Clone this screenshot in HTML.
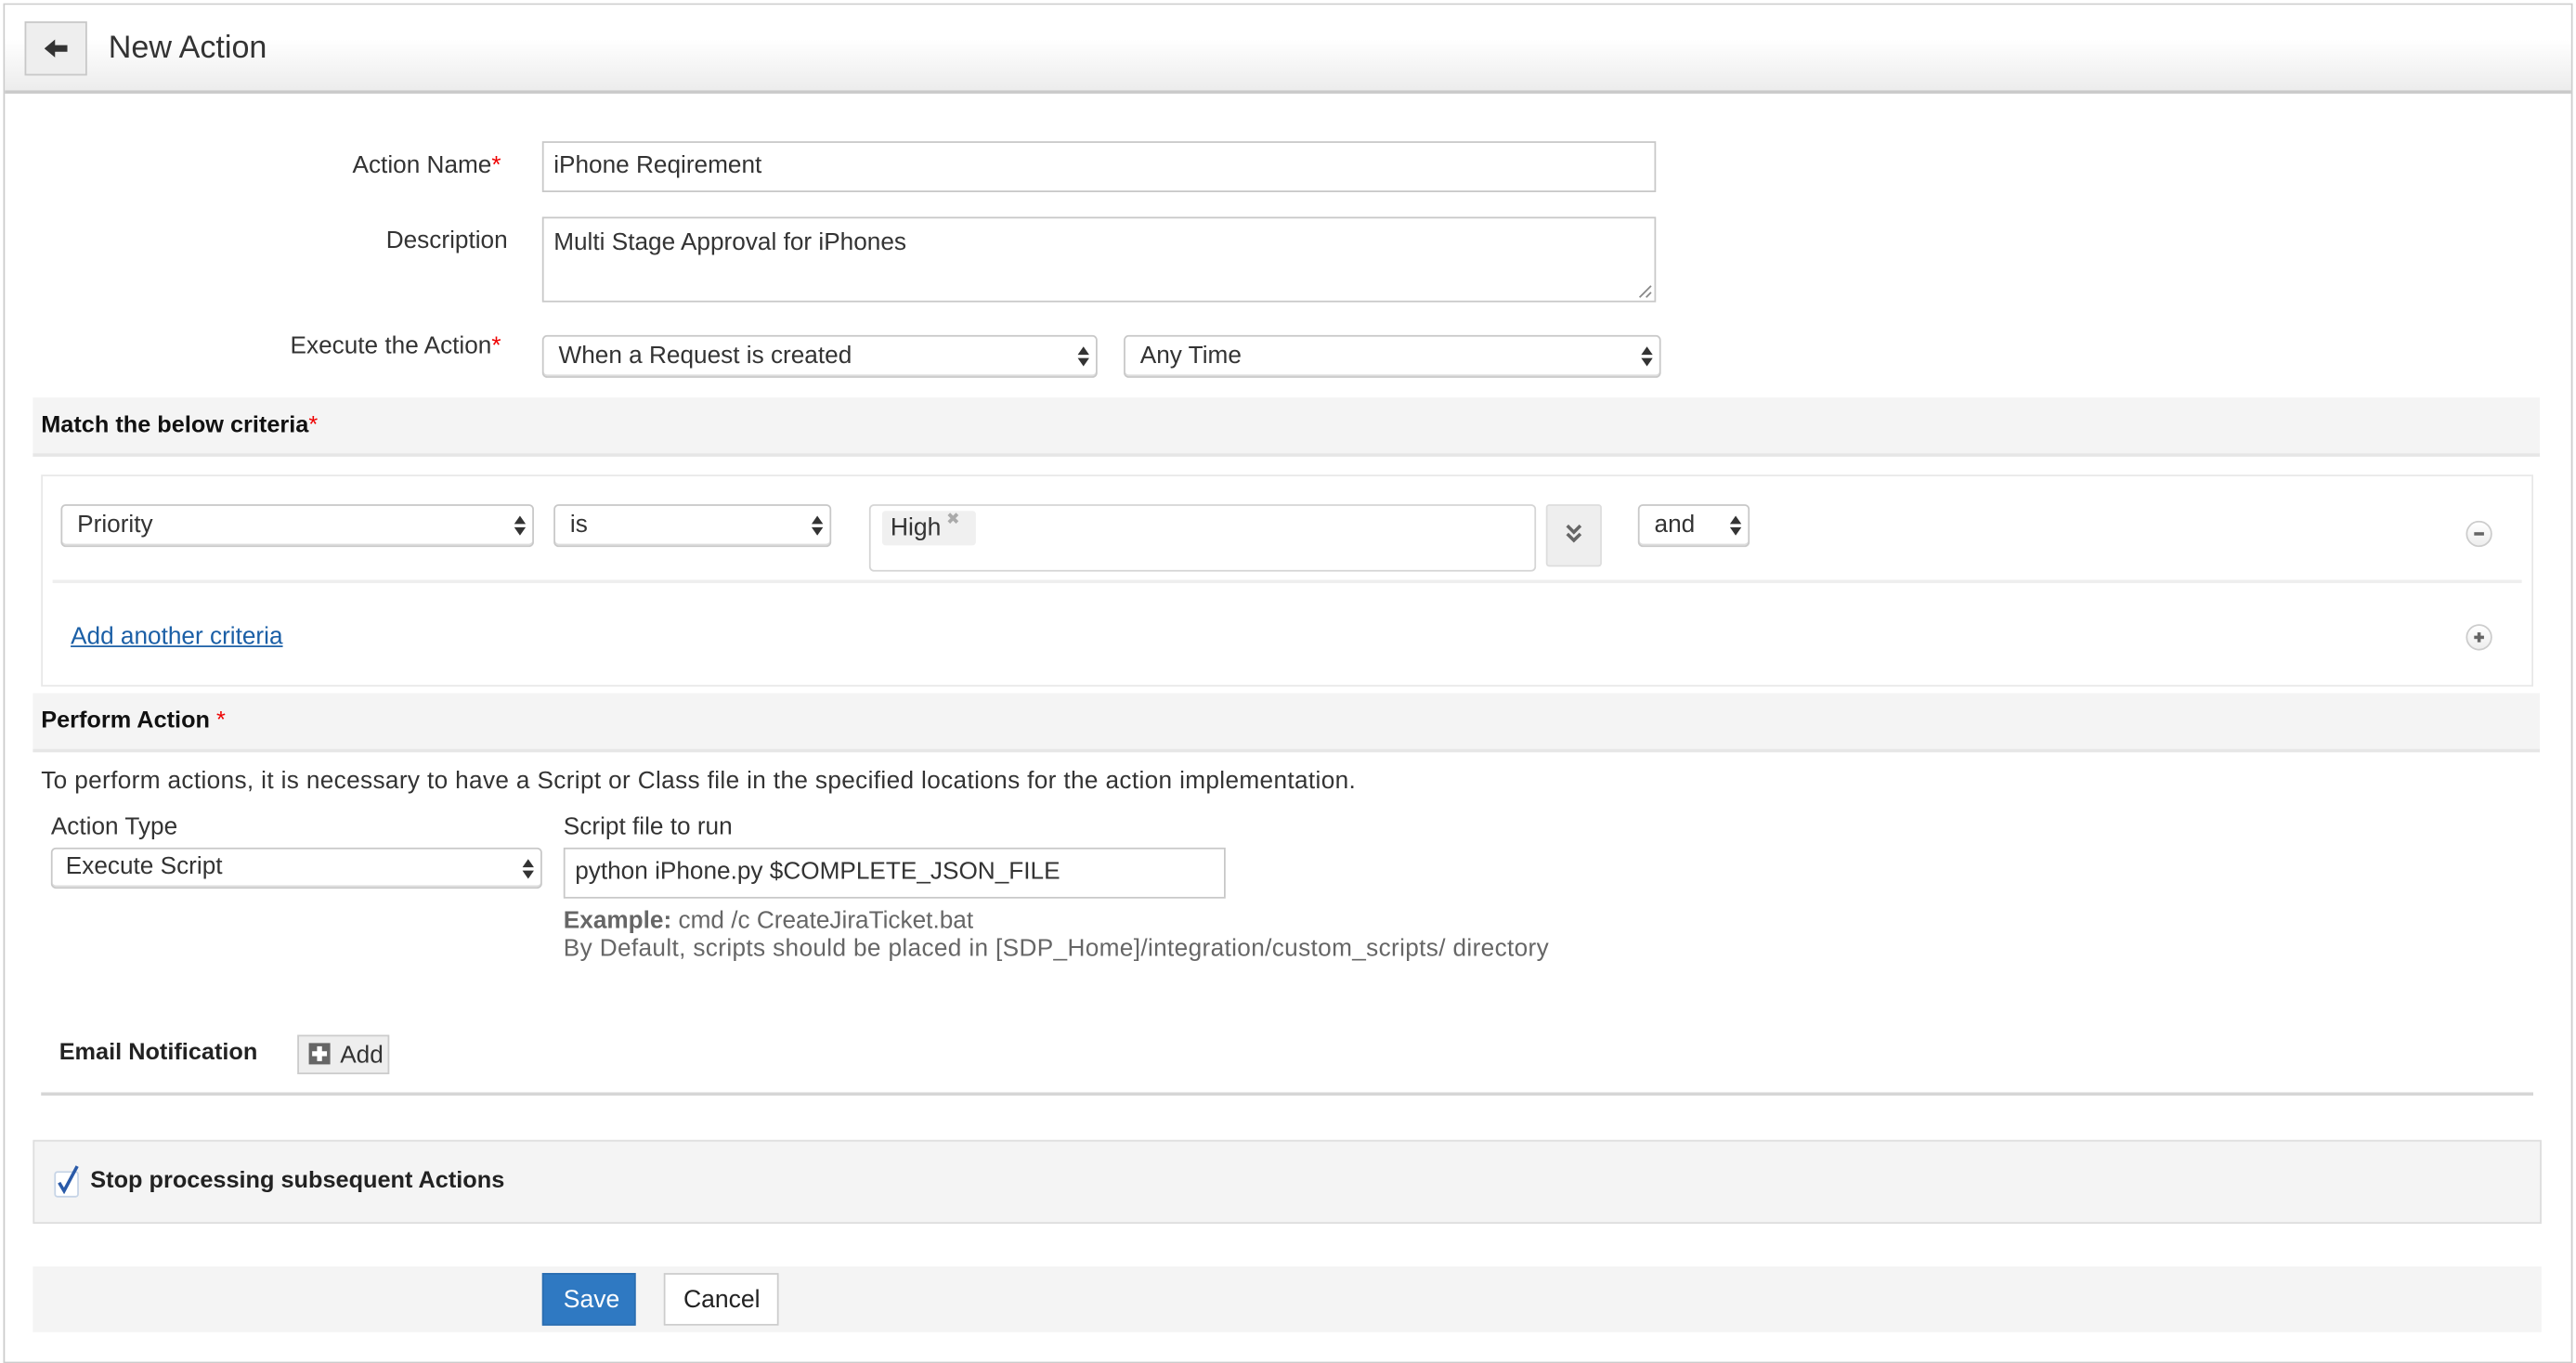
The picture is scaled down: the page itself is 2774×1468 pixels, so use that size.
<!DOCTYPE html>
<html><head><meta charset="utf-8"><style>
html,body{margin:0;padding:0;background:#fff;width:2774px;height:1468px;overflow:hidden}
#w{position:absolute;left:0;top:0;width:1568px;height:830px;transform:scale(1.76913);transform-origin:0 0;font-family:"Liberation Sans",Arial,sans-serif;font-size:14.8px;color:#333}
.a{position:absolute;box-sizing:border-box}
.t{position:absolute;white-space:nowrap;line-height:1}
.r{color:#e00}
.in{position:absolute;box-sizing:border-box;border:1px solid #c8c8c8;background:#fff}
.sel{position:absolute;box-sizing:border-box;border:1px solid #c8c8c8;border-radius:3px;background:#fff;box-shadow:inset 0 -1px 0 #ddd}
.arr{position:absolute;right:4px;top:50%;margin-top:-6px;width:7px;height:12px}
.band{position:absolute;left:20px;width:1526px;background:#f4f4f4;border-bottom:2px solid #e6e6e6;box-sizing:border-box}
b{font-weight:bold;color:#111}
</style></head><body><div id="w">
<div class="a" style="left:2px;top:2px;width:1564px;height:828px;border:1px solid #ccc;border-top-color:#d0d0d0"></div>
<div class="a" style="left:3px;top:3px;width:1562px;height:54px;background:linear-gradient(#fff 40%,#ececec);border-bottom:2px solid #c9c9c9"></div>
<div class="a" style="left:15px;top:13px;width:38px;height:33px;border:1px solid #c8c8c8;background:#eee"></div>
<svg class="a" style="left:27px;top:23px" width="15" height="13" viewBox="0 0 15 13"><path d="M0 6.5L6.5 1v3.5H14v4H6.5V12z" fill="#333"/></svg>
<div class="t" style="left:66px;top:20px;font-size:19.3px;color:#333">New Action</div>

<div class="t" style="right:1263px;top:94px">Action Name<span class="r">*</span></div>
<div class="in" style="left:330px;top:86px;width:678px;height:31px"></div>
<div class="t" style="left:337px;top:94px">iPhone Reqirement</div>

<div class="t" style="right:1259px;top:140px">Description</div>
<div class="in" style="left:330px;top:132px;width:678px;height:52px"></div>
<div class="t" style="left:337px;top:141px">Multi Stage Approval for iPhones</div>
<svg class="a" style="left:997px;top:173px" width="9" height="9"><path d="M8 1L1 8M8 5L5 8" stroke="#888" stroke-width="1"/></svg>

<div class="t" style="right:1263px;top:204px">Execute the Action<span class="r">*</span></div>
<div class="sel" style="left:330px;top:204px;width:338px;height:26px"><svg class="arr" viewBox="0 0 7 12"><path d="M0 5L3.5 0 7 5zM0 7h7l-3.5 5z" fill="#333"/></svg></div>
<div class="t" style="left:340px;top:210px">When a Request is created</div>
<div class="sel" style="left:684px;top:204px;width:327px;height:26px"><svg class="arr" viewBox="0 0 7 12"><path d="M0 5L3.5 0 7 5zM0 7h7l-3.5 5z" fill="#333"/></svg></div>
<div class="t" style="left:694px;top:210px">Any Time</div>

<div class="band" style="top:242px;height:36px"></div>
<div class="t" style="left:25px;top:252px;font-size:14.3px"><b>Match the below criteria</b><span class="r">*</span></div>

<div class="a" style="left:25px;top:289px;width:1517px;height:129px;border:1px solid #e8e8e8"></div>
<div class="sel" style="left:37px;top:307px;width:288px;height:26px"><svg class="arr" viewBox="0 0 7 12"><path d="M0 5L3.5 0 7 5zM0 7h7l-3.5 5z" fill="#333"/></svg></div>
<div class="t" style="left:47px;top:313px">Priority</div>
<div class="sel" style="left:337px;top:307px;width:169px;height:26px"><svg class="arr" viewBox="0 0 7 12"><path d="M0 5L3.5 0 7 5zM0 7h7l-3.5 5z" fill="#333"/></svg></div>
<div class="t" style="left:347px;top:313px">is</div>
<div class="in" style="left:529px;top:307px;width:406px;height:41px;border-radius:3px;border-color:#d5d5d5"></div>
<div class="a" style="left:537px;top:311px;width:57px;height:21px;background:#f0f0f0;border-radius:2px"></div>
<div class="t" style="left:542px;top:314px;font-size:15px">High</div>
<div class="t" style="left:576px;top:312px;font-size:10px;color:#aaa">✖</div>
<div class="a" style="left:941px;top:307px;width:34px;height:38px;background:#eee;border:1px solid #ddd;border-radius:2px"></div>
<svg class="a" style="left:953px;top:319px" width="10" height="12"><path d="M1 1l4 4 4-4M1 6l4 4 4-4" stroke="#666" stroke-width="2" fill="none"/></svg>
<div class="sel" style="left:997px;top:307px;width:68px;height:26px"><svg class="arr" viewBox="0 0 7 12"><path d="M0 5L3.5 0 7 5zM0 7h7l-3.5 5z" fill="#333"/></svg></div>
<div class="t" style="left:1007px;top:313px">and</div>
<div class="a" style="left:1501px;top:317px;width:16px;height:16px;border-radius:50%;border:1px solid #ccc;background:linear-gradient(#fff,#eee)"></div>
<div class="a" style="left:1506px;top:324px;width:6px;height:2px;background:#666"></div>
<div class="a" style="left:32px;top:353px;width:1503px;height:2px;background:#eee"></div>
<div class="t" style="left:43px;top:381px;color:#1b5fa6;text-decoration:underline;font-size:14.8px">Add another criteria</div>
<div class="a" style="left:1501px;top:380px;width:16px;height:16px;border-radius:50%;border:1px solid #ccc;background:linear-gradient(#fff,#eee)"></div>
<div class="a" style="left:1506px;top:387px;width:6px;height:2px;background:#666"></div>
<div class="a" style="left:1508px;top:385px;width:2px;height:6px;background:#666"></div>

<div class="band" style="top:422px;height:36px"></div>
<div class="t" style="left:25px;top:432px;font-size:14.3px"><b>Perform Action</b> <span class="r">*</span></div>
<div class="t" style="left:25px;top:469px;letter-spacing:0.2px">To perform actions, it is necessary to have a Script or Class file in the specified locations for the action implementation.</div>

<div class="t" style="left:31px;top:497px">Action Type</div>
<div class="sel" style="left:31px;top:516px;width:299px;height:25px"><svg class="arr" viewBox="0 0 7 12"><path d="M0 5L3.5 0 7 5zM0 7h7l-3.5 5z" fill="#333"/></svg></div>
<div class="t" style="left:40px;top:521px">Execute Script</div>
<div class="t" style="left:343px;top:497px">Script file to run</div>
<div class="in" style="left:343px;top:516px;width:403px;height:31px"></div>
<div class="t" style="left:350px;top:524px">python iPhone.py $COMPLETE_JSON_FILE</div>
<div class="t" style="left:343px;top:554px;color:#666"><b style="color:#666">Example:</b> cmd /c CreateJiraTicket.bat</div>
<div class="t" style="left:343px;top:571px;color:#666;letter-spacing:0.2px">By Default, scripts should be placed in [SDP_Home]/integration/custom_scripts/ directory</div>

<div class="t" style="left:36px;top:634px;font-size:14.3px"><b style="color:#222">Email Notification</b></div>
<div class="a" style="left:181px;top:630px;width:56px;height:24px;background:#eee;border:1px solid #ccc"></div>
<div class="a" style="left:188px;top:635px;width:13px;height:13px;background:#666"></div>
<div class="a" style="left:193px;top:637px;width:3px;height:9px;background:#fff"></div>
<div class="a" style="left:190px;top:640px;width:9px;height:3px;background:#fff"></div>
<div class="t" style="left:207px;top:636px">Add</div>
<div class="a" style="left:25px;top:665px;width:1517px;height:2px;background:#d6d6d6"></div>

<div class="a" style="left:20px;top:694px;width:1527px;height:51px;background:#f4f4f4;border:1px solid #ddd"></div>
<div class="a" style="left:33px;top:713px;width:15px;height:16px;border:1px solid #c6d4e6;border-radius:2px;background:#fff"></div>
<svg class="a" style="left:34px;top:709px" width="16" height="18"><path d="M2 11l3 5L13 1" stroke="#2a5aa8" stroke-width="2" fill="none"/></svg>
<div class="t" style="left:55px;top:712px;font-size:14.3px"><b style="color:#222">Stop processing subsequent Actions</b></div>

<div class="a" style="left:20px;top:771px;width:1527px;height:40px;background:#f4f4f4"></div>
<div class="a" style="left:330px;top:775px;width:57px;height:32px;background:#2f79c2;border:1px solid #2a6db0"></div>
<div class="t" style="left:343px;top:784px;color:#fff;font-size:15px">Save</div>
<div class="a" style="left:404px;top:775px;width:70px;height:32px;background:#fff;border:1px solid #ccc"></div>
<div class="t" style="left:416px;top:784px;font-size:15px;color:#222">Cancel</div>
</div></body></html>
